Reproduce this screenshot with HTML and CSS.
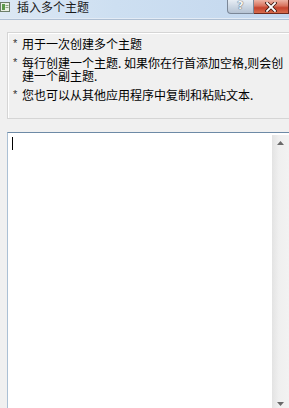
FILE: index.html
```html
<!DOCTYPE html>
<html>
<head>
<meta charset="utf-8">
<link rel="stylesheet" href="styles.css">
</head>
<body>
<div class="window">
  <div class="titlebar">
    <div class="title-left">
      <svg class="app-icon" width="10" height="10" viewBox="0 0 10 10">
        <rect x="0.5" y="0.5" width="9" height="9" fill="#e9efe4" stroke="#6d7f6a"/>
        <rect x="2" y="2" width="3" height="6" fill="#5d9a4c"/>
        <rect x="5.5" y="3" width="3" height="1" fill="#8aa47f"/>
        <rect x="5.5" y="5" width="3" height="1" fill="#8aa47f"/>
      </svg>
      <span class="title-text">插入多个主题</span>
    </div>
    <div class="caption-btns">
      <div class="btn-help">?</div>
      <div class="btn-close">
        <svg width="12" height="10" viewBox="0 0 12 10">
          <path d="M2 1 L10 9 M10 1 L2 9" stroke="#3b1810" stroke-width="3.4" stroke-linecap="square"/>
          <path d="M2 1 L10 9 M10 1 L2 9" stroke="#ffffff" stroke-width="1.8" stroke-linecap="square"/>
        </svg>
      </div>
    </div>
  </div>
  <div class="content">
    <div class="info">
      <div class="item"><span class="star">*</span><span class="txt">用于一次创建多个主题</span></div>
      <div class="item"><span class="star">*</span><span class="txt">每行创建一个主题. 如果你在行首添加空格,则会创建一个副主题.</span></div>
      <div class="item"><span class="star">*</span><span class="txt">您也可以从其他应用程序中复制和粘贴文本.</span></div>
    </div>
    <div class="editor">
      <div class="edit-area"><span class="caret"></span></div>
      <div class="scrollbar">
        <svg class="arrow" width="7" height="4" viewBox="0 0 7 4"><path d="M0 4 L3.5 0 L7 4 Z" fill="#6a6a6a"/></svg>
        <svg class="arrow" width="7" height="4" viewBox="0 0 7 4"><path d="M0 0 L3.5 4 L7 0 Z" fill="#6a6a6a"/></svg>
      </div>
    </div>
  </div>
</div>
</body>
</html>
```

FILE: styles.css
```css
html, body {
  margin: 0;
  padding: 0;
  width: 289px;
  height: 408px;
  overflow: hidden;
  background: #f0f0f0;
}

.window {
  display: flex;
  flex-direction: column;
  height: 408px;
  font-family: "Noto Sans CJK SC", "DejaVu Sans", sans-serif;
  color: #000;
}

.titlebar {
  height: 19px;
  flex: none;
  display: flex;
  justify-content: space-between;
  background: linear-gradient(to right, #dce8f4 0%, #cddff1 40%, #c3d7ee 100%);
  border-bottom: 1px solid #aebfd3;
  box-shadow: inset 0 -1px 0 #e3ebf5;
}

.title-left {
  display: flex;
  align-items: center;
  height: 13px;
  gap: 7px;
}

.app-icon {
  flex: none;
}

.title-text {
  font-size: 12px;
  line-height: 13px;
  color: #1a1a1a;
}

.caption-btns {
  display: flex;
  height: 14px;
}

.btn-help {
  width: 25px;
  height: 13px;
  border: 1px solid #7b8797;
  border-top: none;
  border-radius: 0 0 0 4px;
  background: linear-gradient(to bottom, #e7edf4 0%, #ccd7e3 50%, #b6c3d3 100%);
  color: #f4f6f9;
  font-family: "DejaVu Sans", sans-serif;
  font-weight: bold;
  font-size: 11px;
  line-height: 12px;
  text-align: center;
  text-shadow: 0 0 1px #4a5666, 0 0 1px #4a5666;
}

.btn-close {
  width: 34px;
  height: 13px;
  border: 1px solid #6d2a1e;
  border-top: none;
  border-left: none;
  background: linear-gradient(to bottom, #ecb3a4 0%, #d8735e 45%, #c5432d 60%, #d66b4c 100%);
  display: flex;
  align-items: center;
  justify-content: center;
}

.content {
  flex: 1;
  display: flex;
  flex-direction: column;
  padding: 12px 0 0 7px;
  gap: 13px;
  min-height: 0;
}

.info {
  flex: none;
  height: 87px;
  margin-right: -4px;
  box-sizing: border-box;
  border: 1px solid #d5d5d5;
  box-shadow: inset 1px 1px 0 #ffffff;
  padding: 4px 0 0 5px;
  display: flex;
  flex-direction: column;
  gap: 6px;
}

.item {
  display: flex;
  font-size: 12px;
  line-height: 13px;
}

.star {
  flex: none;
  width: 9px;
  font-family: "Liberation Sans", sans-serif;
  font-size: 11px;
  color: #333;
}

.txt {
  flex: 1;
  letter-spacing: 0;
}

.editor {
  flex: 1;
  display: flex;
  margin-right: -2px;
  background: #fff;
  border: 1px solid #abc0d4;
  border-top-color: #6d8aa6;
  border-bottom: none;
  padding: 2px 1px 0 0;
}

.edit-area {
  flex: 1;
  padding: 2px 0 0 4px;
}

.caret {
  display: block;
  width: 1px;
  height: 13px;
  background: #000;
}

.scrollbar {
  flex: none;
  width: 17px;
  background: linear-gradient(to right, #e3e3e3 0%, #efefef 40%, #f2f2f2 100%);
  display: flex;
  flex-direction: column;
  justify-content: space-between;
  align-items: center;
  padding: 6px 0 2px 0;
}

.arrow {
  flex: none;
}
```
